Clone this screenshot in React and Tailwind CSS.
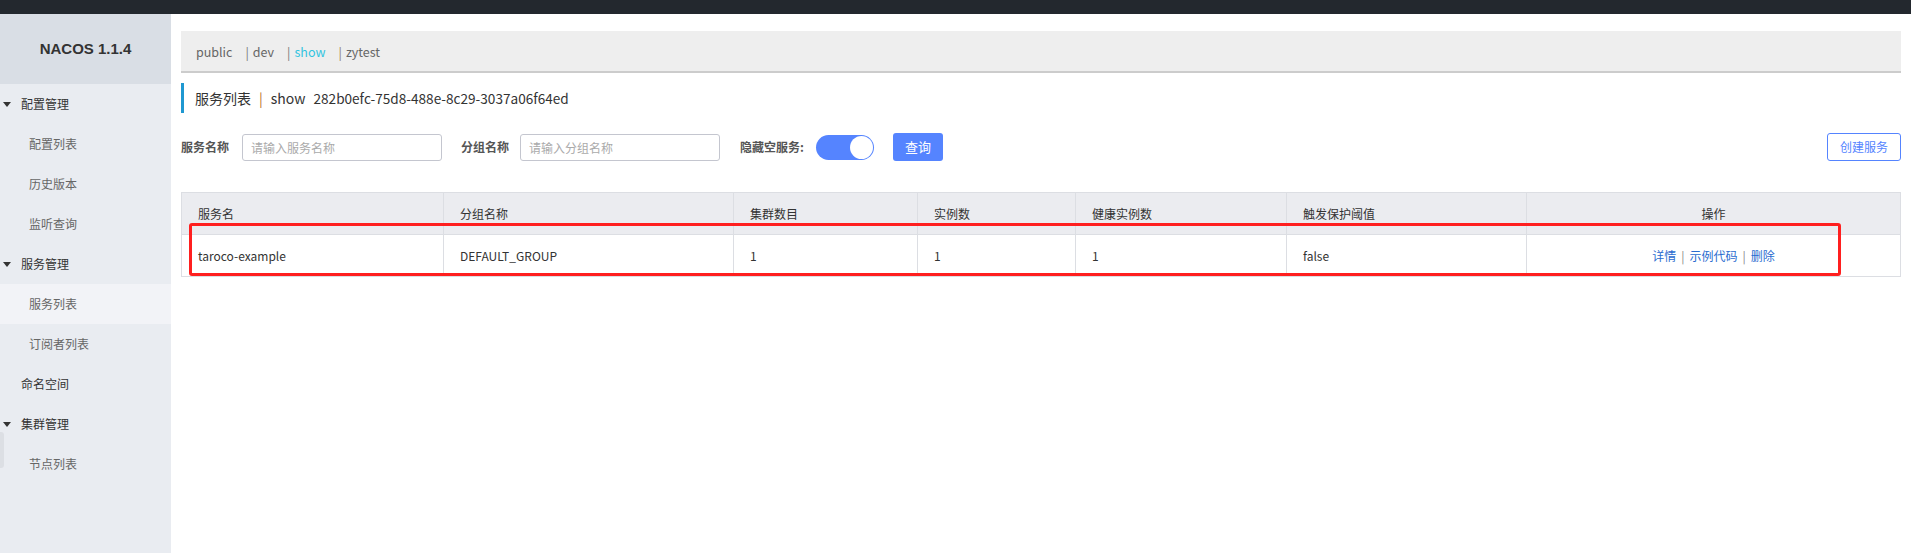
import React from "react";

const menu = [
  { label: "配置管理", kind: "group" },
  { label: "配置列表", kind: "sub" },
  { label: "历史版本", kind: "sub" },
  { label: "监听查询", kind: "sub" },
  { label: "服务管理", kind: "group" },
  { label: "服务列表", kind: "sub", active: true },
  { label: "订阅者列表", kind: "sub" },
  { label: "命名空间", kind: "top" },
  { label: "集群管理", kind: "group" },
  { label: "节点列表", kind: "sub" },
];

const columns = [
  { title: "服务名", width: "w-[261px]" },
  { title: "分组名称", width: "w-[290px]" },
  { title: "集群数目", width: "w-[184px]" },
  { title: "实例数", width: "w-[158px]" },
  { title: "健康实例数", width: "w-[211px]" },
  { title: "触发保护阈值", width: "w-[240px]" },
  { title: "操作", width: "flex-1", center: true },
];

const row = ["taroco-example", "DEFAULT_GROUP", "1", "1", "1", "false"];

const Sidebar = () => (
  <div className="w-[171px] shrink-0 bg-[#e9ecf1] relative">
    <div className="h-[70px] bg-[#d9dee5] flex items-center justify-center">
      <span className="font-['Liberation_Sans',sans-serif] font-bold text-[15px] text-[#333]">
        NACOS 1.1.4
      </span>
    </div>
    {menu.map((item) => (
      <div
        key={item.label}
        className={`h-10 flex items-center text-[12px] ${
          item.active ? "bg-[#f2f3f7]" : ""
        }`}
      >
        {item.kind === "group" && (
          <span className="ml-[3px] w-0 h-0 border-l-[4px] border-r-[4px] border-t-[5px] border-l-transparent border-r-transparent border-t-[#333]" />
        )}
        <span
          className={
            item.kind === "group"
              ? "ml-[10px] text-[#333]"
              : item.kind === "top"
              ? "ml-[21px] text-[#333]"
              : "ml-[29px] text-[#666]"
          }
        >
          {item.label}
        </span>
      </div>
    ))}
    <div className="absolute left-0 top-[418px] w-[4px] h-[36px] rounded-r-[3px] bg-[#dcdfe4]" />
  </div>
);

const App = () => {
  return (
    <div className="h-screen flex flex-col bg-white font-['Noto_Sans_CJK_SC',sans-serif]">
      <div className="h-[14px] bg-[#23282e] shrink-0" />
      <div className="flex flex-1">
        <Sidebar />

        <div className="flex-1 pl-[10px] pr-[10px] pt-[17px]">
          {/* namespaces */}
          <div className="h-[42px] bg-[#eeeeee] border-b-2 border-[#cccccc] flex items-center pt-[2px] pl-[15px] text-[12.5px] text-[#666]">
            <span>public</span>
            <span className="ml-[13px] text-[#777]">|</span>
            <span className="ml-[4px]">dev</span>
            <span className="ml-[13px] text-[#777]">|</span>
            <span className="ml-[4px] text-[#33c4e0]">show</span>
            <span className="ml-[13px] text-[#8a7a66]">|</span>
            <span className="ml-[4px]">zytest</span>
          </div>

          {/* title */}
          <div className="mt-[10px] h-[30px] border-l-[3px] border-[#1f98d1] flex items-center pl-[11px] text-[14px] text-[#333]">
            <span>服务列表</span>
            <span className="mx-[8px] text-[#b8732a]">|</span>
            <span>show</span>
            <span className="ml-[8px] text-[13.6px]">282b0efc-75d8-488e-8c29-3037a06f64ed</span>
          </div>

          {/* search */}
          <div className="mt-[20px] h-[28px] flex items-center text-[12px]">
            <span className="font-bold text-[#555]">服务名称</span>
            <input
              placeholder="请输入服务名称"
              className="ml-[13px] w-[200px] h-[27px] border border-[#c4c6cf] rounded-[3px] px-[8px] text-[12px] placeholder-[#aaa] outline-none"
            />
            <span className="ml-[19px] font-bold text-[#555]">分组名称</span>
            <input
              placeholder="请输入分组名称"
              className="ml-[11px] w-[200px] h-[27px] border border-[#c4c6cf] rounded-[3px] px-[8px] text-[12px] placeholder-[#aaa] outline-none"
            />
            <span className="ml-[20px] font-bold text-[#555]">隐藏空服务:</span>
            <div className="ml-[12px] w-[58px] h-[25px] rounded-full bg-[#5584ff] flex items-center justify-end pr-[1px]">
              <div className="w-[23px] h-[23px] rounded-full bg-white" />
            </div>
            <button className="ml-[19px] w-[50px] h-[28px] rounded-[3px] bg-[#5584ff] text-white text-[13px]">
              查询
            </button>
            <div className="flex-1" />
            <button className="w-[74px] h-[28px] rounded-[3px] border border-[#5584ff] bg-white text-[#5584ff] text-[12px]">
              创建服务
            </button>
          </div>

          {/* table */}
          <div className="relative mt-[31px] border border-[#dcdee3] text-[12px] text-[#333]">
            <div className="flex h-[42px] bg-[#ebecf0] border-b border-[#dcdee3]">
              {columns.map((c, i) => (
                <div
                  key={c.title}
                  className={`${c.width} flex items-center ${
                    c.center ? "justify-center" : "pl-[16px]"
                  } ${i > 0 ? "border-l border-[#dcdee3]" : ""}`}
                >
                  {c.title}
                </div>
              ))}
            </div>
            <div className="flex h-[41px]">
              {row.map((v, i) => (
                <div
                  key={i}
                  className={`${columns[i].width} flex items-center pl-[16px] ${
                    i > 0 ? "border-l border-[#dcdee3]" : ""
                  }`}
                >
                  {v}
                </div>
              ))}
              <div className="flex-1 flex items-center justify-center border-l border-[#dcdee3] text-[#2a6ccf]">
                <span>详情</span>
                <span className="mx-[5px] text-[#888]">|</span>
                <span>示例代码</span>
                <span className="mx-[5px] text-[#888]">|</span>
                <span>删除</span>
              </div>
            </div>

            {/* annotation */}
            <div className="absolute left-[7px] top-[30px] w-[1652px] h-[53px] border-[3px] border-[#ff1f1f] rounded-[3px] pointer-events-none" />
          </div>
        </div>
      </div>
    </div>
  );
};

export default App;
